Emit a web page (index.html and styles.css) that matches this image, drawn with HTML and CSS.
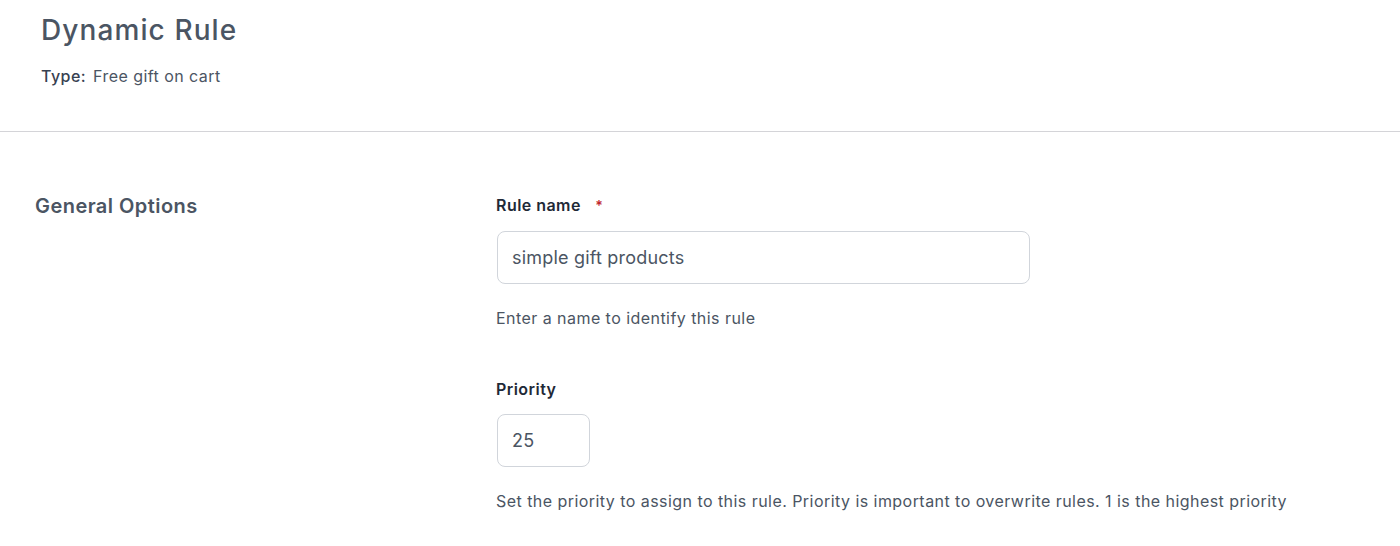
FILE: index.html
```html
<!DOCTYPE html>
<html>
<head>
<meta charset="utf-8">
<link rel="stylesheet" href="styles.css">
</head>
<body>
<header class="header">
  <h1 class="title">Dynamic Rule</h1>
  <div class="type"><span class="type-label">Type:</span> Free gift on cart</div>
</header>
<main class="section">
  <div class="section-title">General Options</div>
  <div class="fields">
    <div class="field">
      <label class="label">Rule name <span class="req">*</span></label>
      <input class="input input-wide" type="text" value="simple gift products">
      <p class="help">Enter a name to identify this rule</p>
    </div>
    <div class="field">
      <label class="label">Priority</label>
      <input class="input input-small" type="text" value="25">
      <p class="help">Set the priority to assign to this rule. Priority is important to overwrite rules. 1 is the highest priority</p>
    </div>
  </div>
</main>
</body>
</html>
```
FILE: styles.css
```css
* { box-sizing: border-box; }
body {
  margin: 0;
  font-family: Inter, "Noto Sans", sans-serif;
  color: #4b5563;
  background: #fff;
  letter-spacing: 0.45px;
}
.header {
  padding: 12px 41px 0;
  height: 132px;
  border-bottom: 1px solid #d4d4d8;
}
.title {
  margin: 0;
  font-size: 28px;
  font-weight: 500;
  line-height: 36px;
  color: #4b5563;
  letter-spacing: 1.1px;
}
.type {
  margin-top: 18px;
  font-size: 16px;
  line-height: 20px;
  color: #4b5563;
}
.type-label { font-weight: 500; color: #374151; margin-right: 2px; }
.section {
  display: flex;
  padding: 59px 0 0 35px;
}
.section-title {
  width: 461px;
  padding-top: 1px;
  font-size: 20px;
  font-weight: 600;
  line-height: 28px;
  color: #4b5563;
}
.fields { display: flex; flex-direction: column; }
.field { display: flex; flex-direction: column; margin-bottom: 46px; }
.label {
  font-size: 16px;
  font-weight: 600;
  line-height: 28px;
  color: #1f2937;
  margin-bottom: 11px;
}
.req { color: #c0262d; margin-left: 10px; font-size: 14px; }
.input {
  margin-left: 1px;
  height: 53px;
  border: 1px solid #d1d5db;
  border-radius: 8px;
  padding: 0 14px;
  font-family: inherit;
  font-size: 18px;
  letter-spacing: 0.2px;
  color: #4b5563;
  background: #fff;
  outline: none;
}
.input-wide { width: 533px; }
.input-small { width: 93px; }
.help {
  margin: 23px 0 0;
  font-size: 16px;
  line-height: 22px;
  color: #4b5563;
}
```
